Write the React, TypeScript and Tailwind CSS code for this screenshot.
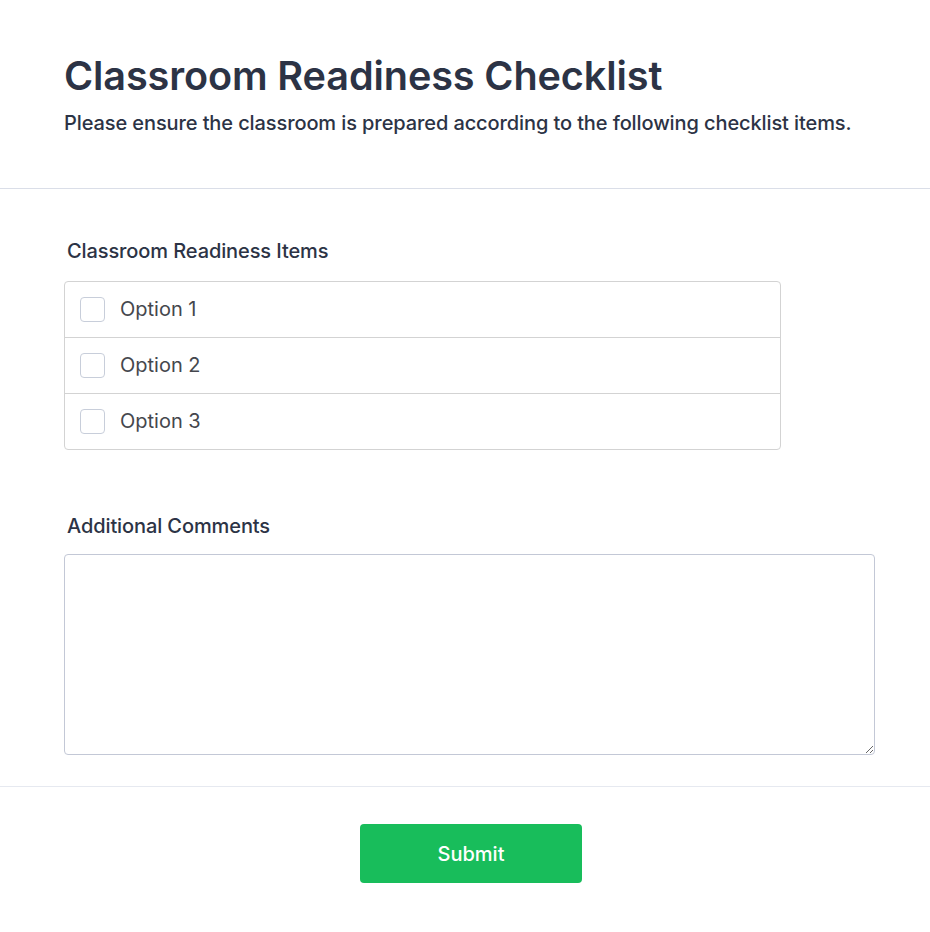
const items = ['Option 1', 'Option 2', 'Option 3']

export default function App() {
  return (
    <div className="min-h-[932px] bg-white text-[#2c3345]" style={{ fontFamily: 'Inter, "Noto Sans", sans-serif' }}>
      <div className="border-b border-[#dadee8] px-16 pt-[52px] pb-[52px]">
        <h1 className="text-[39.6px] font-semibold leading-[48px] tracking-[-0.1px]">Classroom Readiness Checklist</h1>
        <p className="mt-[10px] text-[20px] font-medium leading-[26px] tracking-[-0.1px]">Please ensure the classroom is prepared according to the following checklist items.</p>
      </div>

      <div className="border-b border-[#e6e9f0] px-16 pt-[49px] pb-[31px]">
        <label className="block pl-[3px] text-[20px] font-medium leading-[26px] tracking-[-0.1px]">Classroom Readiness Items</label>
        <div className="mt-[17px] w-[717px] rounded-[4px] border border-[#d3d3d3]">
          {items.map((item, i) => (
            <div key={item} className={'flex items-center pl-[15px] ' + (i > 0 ? 'h-[56px] border-t border-[#d3d3d3]' : 'h-[55px]')}>
              <span className="h-[25px] w-[25px] rounded-[4px] border border-[#c8ceda] bg-white" />
              <span className="ml-[15px] pb-[2px] text-[20px] leading-[24px] text-[#45474d]">{item}</span>
            </div>
          ))}
        </div>

        <label className="mt-[63px] block pl-[3px] text-[20px] font-medium leading-[26px] tracking-[-0.1px]">Additional Comments</label>
        <textarea className="mt-[15px] block h-[201px] w-[811px] rounded-[4px] border border-[#c3c8d6] p-3 outline-none" />
      </div>

      <div className="flex justify-center pt-[37px] pl-[12px]">
        <button className="h-[59px] w-[222px] rounded-[4px] bg-[#18bd5b] text-[20px] font-medium text-white">Submit</button>
      </div>
    </div>
  )
}
